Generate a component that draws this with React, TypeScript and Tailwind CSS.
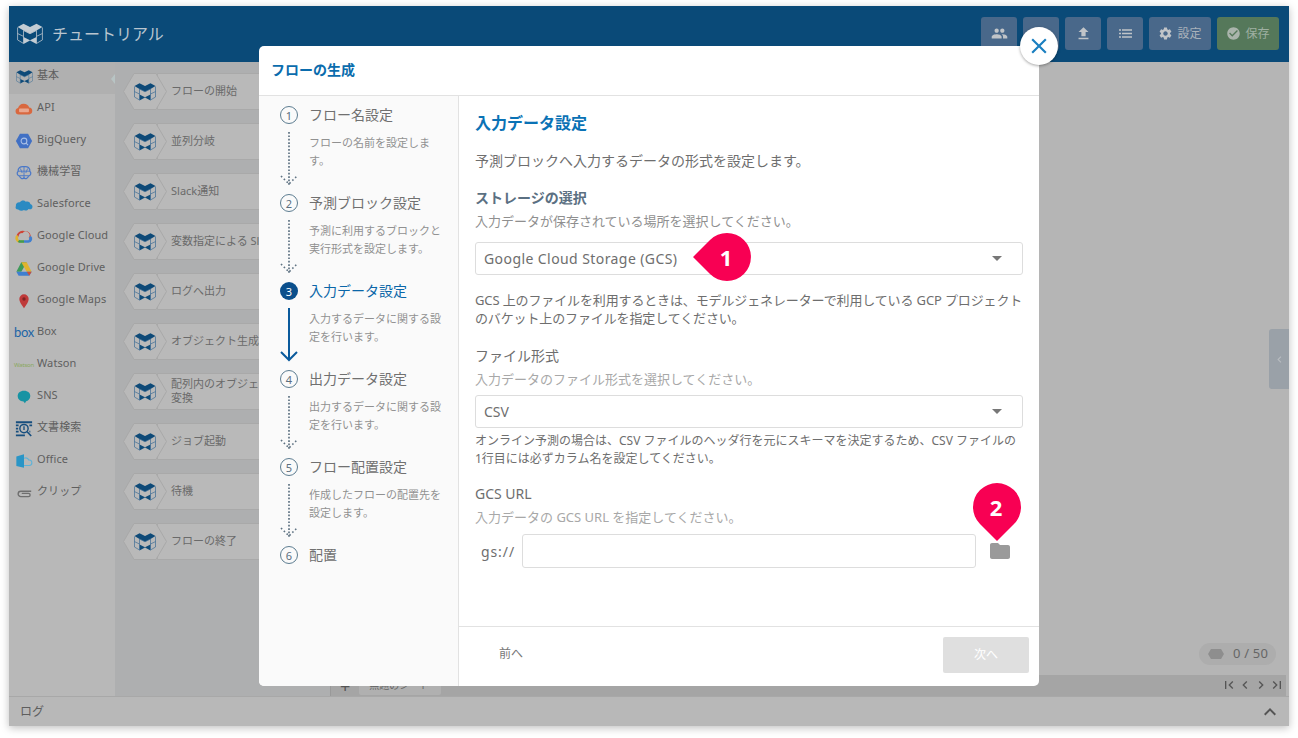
import React from "react";
import { MdPeople, MdFileUpload, MdSettings, MdCheckCircle, MdFolder, MdKeyboardArrowUp, MdChevronLeft, MdClose, MdFirstPage, MdLastPage } from "react-icons/md";

const Logo = ({ c, line, w = 22, h = 18 }: { c: string; line: string; w?: number; h?: number }) => (
  <svg width={w} height={h} viewBox="0 0 22 18" className="shrink-0">
    <path d="M0.5 3 L5.5 0.3 L11 3 L16.5 0.3 L21.5 3 L16.5 6 L11 8.8 L5.5 6 Z" fill={c} />
    <path d="M5.5 11.5 L11 14.2 L16.5 11.5 L16.5 17.4 L11 14.5 L5.5 17.4 Z" fill={c} />
    <path d="M0.5 3.5 V14 L5.5 17 V6 M21.5 3.5 V14 L16.5 17 V6 M0.5 8.6 L5.5 11 M21.5 8.6 L16.5 11 M5.5 6 L11 8.8 L16.5 6" stroke={line} strokeWidth="0.7" fill="none" />
  </svg>
);

const Ic = ({ children }: { children: React.ReactNode }) => (
  <svg width="18" height="18" viewBox="0 0 20 20">{children}</svg>
);

const side: [string, React.ReactNode][] = [
  ["基本", <Logo c="#0e4a78" line="#3f6f96" w={17} h={14} />],
  ["API", <Ic><path d="M4 16 a3.6 3.6 0 0 1 -.6 -7.1 a6.6 6.6 0 0 1 12.4 -.6 a3.9 3.9 0 0 1 .2 7.7 Z" fill="#d9683f" /><rect x="4.5" y="9.5" width="11" height="4" rx="1" fill="#e9a78f" /></Ic>],
  ["BigQuery", <Ic><path d="M5.5 2 H14.5 L19 10 L14.5 18 H5.5 L1 10 Z" fill="#4170c4" /><circle cx="10" cy="10" r="3.2" fill="none" stroke="#a9bfe6" strokeWidth="1.2" /><path d="M12.3 12.3 L14.5 14.5" stroke="#a9bfe6" strokeWidth="1.2" /></Ic>],
  ["機械学習", <Ic><path d="M10 3 C6 2 3 5 3.5 8 C1.5 10 2.5 13 5 13.5 C6 16.5 9 17 10 15.5 C11 17 14 16.5 15 13.5 C17.5 13 18.5 10 16.5 8 C17 5 14 2 10 3 Z" fill="none" stroke="#4a78c8" strokeWidth="1.4" /><path d="M10 3 V15.5 M3.5 8 H16.5 M5 13 L15 13 M6 5 L8 10 M14 5 L12 10" stroke="#4a78c8" strokeWidth="1" fill="none" /></Ic>],
  ["Salesforce", <Ic><path d="M3.5 15 C1 15 0 13 1 11 C0.5 8.5 3 6.5 5.5 7 C7 4.5 10.5 4.5 12 6.5 C14.5 5.5 17 7 17 9 C19.5 9.5 20 12 19 13.5 C18 15 16 15 15 14.5 C13.5 16.5 11.5 16.5 10 15.5 C8 17 5.5 16.5 3.5 15 Z" fill="#2a8ac2" /></Ic>],
  ["Google Cloud", <Ic><path d="M5 16.5 H10 V13.5 H5.5 A2.2 2.2 0 0 1 4 9.8 L2 7.6 A5.2 5.2 0 0 0 5 16.5 Z" fill="#e0b32e" /><path d="M10 16.5 H15 A4.5 4.5 0 0 0 17.5 8.5 L15.3 10.7 A2 2 0 0 1 15 13.5 H10 Z" fill="#3f7fd0" /><path d="M2 7.6 A6.8 6.8 0 0 1 10.5 3.4 L8.4 5.7 A4.2 4.2 0 0 0 4 9.8 Z" fill="#cf4436" /><path d="M10.5 3.4 A6.8 6.8 0 0 1 17.5 8.5 L15.3 10.7 A4.2 4.2 0 0 0 8.4 5.7 Z" fill="#cf4436" /><path d="M10 13.5 H5.5 A2.2 2.2 0 0 1 5 13 L3.2 15.2 A5 5 0 0 0 5 16.5 H10 Z" fill="#3d9a58" /></Ic>],
  ["Google Drive", <Ic><path d="M7 2.5 H13 L7 13 H1.5 Z" fill="#3d9a58" /><path d="M7 2.5 H13 L18.5 13 H13 Z" fill="#e0b32e" /><path d="M4.5 13 H18.5 L15.8 17.5 H4 L1.5 13 Z" fill="#3f7fd0" /><path d="M13 13 H18.5 L15.8 17.5 Z" fill="#c9503c" /></Ic>],
  ["Google Maps", <Ic><path d="M10 18 C7 13.5 4.8 11 4.8 7.8 A5.2 5.2 0 0 1 15.2 7.8 C15.2 11 13 13.5 10 18 Z" fill="#bf3a3a" /><circle cx="10" cy="7.8" r="1.9" fill="#7e2424" /></Ic>],
  ["Box", <span className="text-[13px] tracking-[-0.3px] text-[#1d65a6] leading-none" style={{ fontFamily: '"Lato", sans-serif' }}>box</span>],
  ["Watson", <span className="text-[6px] tracking-[-0.2px] text-[#8aa85e] leading-none">Watson</span>],
  ["SNS", <Ic><path d="M10 3 C14.5 3 17 5.6 17 9 C17 12.2 14.6 14.4 12.4 14.8 L11 17 L9.5 15 C5.5 15 3 12.4 3 9 C3 5.6 5.5 3 10 3 Z" fill="#1793a3" /></Ic>],
  ["文書検索", <Ic><path d="M1 2.5 H19 M1 17 H11 M1 6 H4 M16 6 H19 M1 9.5 H3.5 M1 13 H4 M16 13 H17" stroke="#174e7e" strokeWidth="2" fill="none" /><circle cx="10" cy="9.5" r="4.6" fill="none" stroke="#174e7e" strokeWidth="1.6" /><path d="M13.5 13 L18 17.8" stroke="#174e7e" strokeWidth="1.8" /><path d="M10 7 V11" stroke="#174e7e" strokeWidth="1.5" /></Ic>],
  ["Office", <Ic><path d="M1.5 5 L10 2.5 V17.5 L1.5 15.5 Z" fill="#2a95c6" /><path d="M10 7 A4 4 0 0 1 15.5 9 A3 3 0 0 1 16 15 H10" fill="none" stroke="#5fb3d8" strokeWidth="1.2" /></Ic>],
  ["クリップ", <Ic><path d="M18 8 H6.5 A3 3 0 0 0 6.5 14 H15 A1.8 1.8 0 0 0 15 10.4 H7.5" fill="none" stroke="#6e6e6e" strokeWidth="1.5" /></Ic>],
];

const blocks = ["フローの開始", "並列分岐", "Slack通知", "変数指定による Slack通知", "ログへ出力", "オブジェクト生成", "配列内のオブジェクト変換", "ジョブ起動", "待機", "フローの終了"];

const steps: { t: string; d: string[]; n: string; active?: boolean; last?: boolean }[] = [
  { n: "1", t: "フロー名設定", d: ["フローの名前を設定しま", "す。"] },
  { n: "2", t: "予測ブロック設定", d: ["予測に利用するブロックと", "実行形式を設定します。"] },
  { n: "3", t: "入力データ設定", d: ["入力するデータに関する設", "定を行います。"], active: true },
  { n: "4", t: "出力データ設定", d: ["出力するデータに関する設", "定を行います。"] },
  { n: "5", t: "フロー配置設定", d: ["作成したフローの配置先を", "設定します。"] },
  { n: "6", t: "配置", d: [], last: true },
];

const Caret = () => <span className="w-0 h-0 border-x-[5px] border-x-transparent border-t-[5px] border-t-[#777777]" />;

const HeadBtn = ({ children, w = "w-9" }: { children: React.ReactNode; w?: string }) => (
  <div className={`${w} h-[33px] rounded-[3px] bg-[#49688a] flex items-center justify-center gap-1 text-[#aab2ba] text-[12px]`}>{children}</div>
);

export default function App() {
  return (
    <div className="w-full h-[738px] overflow-hidden bg-white pt-[6px] px-[9px] text-[#6e6e6e]" style={{ fontFamily: '"Noto Sans", "Noto Sans CJK JP", sans-serif' }}>
      <div className="relative h-[720px] flex flex-col shadow-[0_2px_8px_rgba(0,0,0,0.25)]">
        <header className="h-14 shrink-0 bg-[#0a4a78] flex items-center pl-2 pr-[10px]">
          <Logo c="#c3ccd3" line="#b4c0ca" w={26} h={22} />
          <span className="ml-[9px] text-[16px] text-[#b9c5cf]">チュートリアル</span>
          <div className="ml-auto flex gap-[6px] mt-[-1px]">
            <HeadBtn><MdPeople size={17} color="#c0c4c8" /></HeadBtn>
            <HeadBtn><MdPeople size={17} color="#c0c4c8" /></HeadBtn>
            <HeadBtn><MdFileUpload size={17} color="#c0c4c8" /></HeadBtn>
            <HeadBtn>
              <svg width="13" height="9" viewBox="0 0 13 9">
                <path d="M3 1 H13 M3 4.5 H13 M3 8 H13" stroke="#c0c4c8" strokeWidth="1.6" />
                <path d="M0 1 H2 M0 4.5 H2 M0 8 H2" stroke="#c0c4c8" strokeWidth="1.6" />
              </svg>
            </HeadBtn>
            <HeadBtn w="w-[62px]"><MdSettings size={15} color="#c0c4c8" /><span>設定</span></HeadBtn>
            <div className="w-[62px] h-[33px] rounded-[3px] bg-[#55785a] flex items-center justify-center gap-1 text-[#9fb0a2] text-[12px]"><MdCheckCircle size={15} color="#aab4ac" /><span>保存</span></div>
          </div>
        </header>

        <div className="flex-1 flex min-h-0">
          <aside className="w-[106px] shrink-0 bg-[#b8b8b8]">
            {side.map(([label, icon], i) => (
              <div key={label} className={`h-8 flex items-center relative ${i === 0 ? "bg-[#b0b0b0]" : ""}`}>
                <span className="w-7 ml-[1px] -mt-[3px] shrink-0 flex justify-center items-center">{icon}</span>
                <span className="ml-[-3px] pl-[2px] text-[11px] tracking-[0.1px] text-[#5f5f5f] whitespace-nowrap -mt-[5px]">{label}</span>
                {i === 0 && <span className="absolute right-0 top-[12px] w-0 h-0 border-y-[5px] border-y-transparent border-r-[4px] border-r-[#b8c4c4]" />}
              </div>
            ))}
          </aside>

          <section className="w-[215px] shrink-0 bg-[#aeafb0] pl-2 pt-[11px] flex flex-col gap-[13px] overflow-hidden">
            {blocks.map((b) => (
              <div key={b} className="h-[37px] flex shrink-0">
                <div className="relative z-10 w-[44px] h-[37px] shrink-0 -mr-[10px] flex items-center justify-center">
                  <svg width="44" height="37" viewBox="0 0 44 37" className="absolute inset-0">
                    <path d="M11 0.5 H33 L43.5 18.5 L33 36.5 H11 L0.5 18.5 Z" fill="#b9b9b9" stroke="#a8a8a8" />
                  </svg>
                  <span className="relative flex"><Logo c="#0e4a78" line="#3f6f96" /></span>
                </div>
                <div className="w-[190px] h-[37px] bg-[#b9b9b9] border border-[#a9a9a9] rounded-r-[3px] flex items-center pl-[13px] pb-[2px] text-[11px] leading-[14px] text-[#6a6a6a] whitespace-pre-wrap">
                  {b === "配列内のオブジェクト変換" ? "配列内のオブジェクト\n変換" : b}
                </div>
              </div>
            ))}
          </section>

          <main className="flex-1 flex flex-col bg-[#b5b5b5] relative">
            <div className="flex-1" />
            <div className="h-[21px] bg-[#a5a5a5] mr-[3px] border-l border-[#999999] flex items-center">
              <span className="ml-[9px] text-[18px] text-[#555555] leading-none">+</span>
              <div className="ml-[9px] w-[82px] h-[18px] bg-[#b0b0b0] rounded-[2px] text-[10px] text-[#666666] pl-[10px] flex items-center">無題のシート</div>
              <div className="ml-auto mr-[1px] flex items-center gap-0 text-[#555555] -mt-[1px]">
                <MdFirstPage size={16} /><MdChevronLeft size={16} /><MdChevronLeft size={16} className="rotate-180" /><MdLastPage size={16} />
              </div>
            </div>
            <div className="absolute right-[13px] bottom-[31px] h-[22px] w-[77px] rounded-full bg-[#adadad] flex items-center pl-[9px] text-[13px] tracking-[0.2px] text-[#666666]">
              <svg width="16" height="10" viewBox="0 0 16 10"><path d="M3 0 H13 L16 5 L13 10 H3 L0 5 Z" fill="#8e8e8e" /></svg>
              <span className="ml-[9px]">0 / 50</span>
            </div>
            <div className="absolute right-0 top-[267px] w-5 h-[60px] bg-[#9aa1a8] rounded-l-[3px] flex items-center justify-center">
              <MdChevronLeft size={13} color="#b8bcc0" />
            </div>
          </main>
        </div>

        <footer className="h-[30px] shrink-0 bg-[#b8b8b8] border-t border-[#a8a8a8] flex items-center pl-[11px] pr-[7px] text-[12px] text-[#5e5e5e]">
          ログ
          <MdKeyboardArrowUp size={24} color="#555555" className="ml-auto" />
        </footer>

        {/* Modal */}
        <div className="absolute left-[250px] top-[40px] w-[780px] h-[640px] bg-white rounded-[5px] flex flex-col">
          <div className="h-[50px] shrink-0 border-b border-[#e2e2e2] flex items-center pl-3 pb-[2px] text-[14px] font-bold text-[#0a6cad]">フローの生成</div>
          <div className="flex-1 flex min-h-0">
            <nav className="w-[200px] shrink-0 bg-[#fafafa] border-r border-[#e2e2e2] pt-[10px] rounded-bl-[5px]">
              {steps.map((s) => (
                <div key={s.n} className="h-[88px] flex">
                  <div className="ml-[21px] w-[18px] shrink-0 flex flex-col items-center">
                    <span className={`w-[18px] h-[18px] rounded-full flex items-center justify-center text-[11px] leading-none ${s.active ? "bg-[#0a4f8c] text-white" : "border border-[#5d7d91] text-[#5a6e7e]"}`}>{s.n}</span>
                    {!s.last && (
                      s.active ? (
                        <svg width="20" height="62" viewBox="0 0 20 62" className="shrink-0">
                          <path d="M10 8 V60 M2 52 L10 60 L18 52" stroke="#0a5a9c" strokeWidth="2" fill="none" />
                        </svg>
                      ) : (
                        <svg width="20" height="62" viewBox="0 0 20 62" className="shrink-0">
                          <path d="M10 8 V61" stroke="#5e7282" strokeWidth="1.7" strokeDasharray="1.7 1.7" fill="none" />
                          <path d="M2 52 L10 60 L18 52" stroke="#5e7282" strokeWidth="1.6" strokeDasharray="1.6 2.4" fill="none" />
                        </svg>
                      )
                    )}
                  </div>
                  <div className="ml-[11px] w-[136px]">
                    <div className={`text-[14px] leading-[18px] whitespace-nowrap ${s.active ? "text-[#0a66a8]" : "text-[#707070]"}`}>{s.t}</div>
                    <div className="mt-[10px] text-[11px] leading-[18px] text-[#919191] whitespace-nowrap">
                      {s.d.map((l) => <div key={l}>{l}</div>)}
                    </div>
                  </div>
                </div>
              ))}
            </nav>
            <div className="flex-1 flex flex-col min-w-0 relative">
              <div className="flex-1 pl-4 pr-4 pt-[16px]">
                <h2 className="text-[16px] font-bold leading-[22px] text-[#0a72b5]">入力データ設定</h2>
                <p className="mt-[16px] text-[14px] leading-[22px]">予測ブロックへ入力するデータの形式を設定します。</p>
                <h3 className="mt-[15px] text-[14px] font-bold leading-[22px] text-[#5b7082]">ストレージの選択</h3>
                <p className="mt-[1px] text-[13px] leading-[22px] text-[#8f8f8f]">入力データが保存されている場所を選択してください。</p>
                <div className="mt-[10px] h-[33px] w-[548px] border border-[#dddddd] rounded-[3px] flex items-center pl-2 pr-[20px] pb-[1px] text-[14px] tracking-[0.42px]">
                  Google Cloud Storage (GCS)
                  <span className="ml-auto flex"><Caret /></span>
                </div>
                <p className="mt-[16px] w-[560px] text-[13px] leading-[18px] tracking-[-0.13px] whitespace-nowrap">GCS 上のファイルを利用するときは、モデルジェネレーターで利用している GCP プロジェクト<br />のバケット上のファイルを指定してください。</p>
                <h3 className="mt-[18px] text-[14px] leading-[22px]">ファイル形式</h3>
                <p className="mt-[1px] text-[13px] leading-[22px] text-[#a8a8a8]">入力データのファイル形式を選択してください。</p>
                <div className="mt-[5px] h-[33px] w-[548px] border border-[#dddddd] rounded-[3px] flex items-center pl-2 pr-[20px] pb-[1px] text-[14px]">
                  CSV
                  <span className="ml-auto flex"><Caret /></span>
                </div>
                <p className="mt-[4px] w-[560px] text-[12px] leading-[18px] whitespace-nowrap">オンライン予測の場合は、CSV ファイルのヘッダ行を元にスキーマを決定するため、CSV ファイルの<br />1行目には必ずカラム名を設定してください。</p>
                <h3 className="mt-[15px] text-[14px] leading-[22px]">GCS URL</h3>
                <p className="mt-[1px] text-[13px] leading-[22px] text-[#a8a8a8]">入力データの GCS URL を指定してください。</p>
                <div className="mt-[6px] flex items-center">
                  <span className="ml-[6px] w-[41px] text-[14px] tracking-[0.9px]">gs://</span>
                  <div className="w-[454px] h-[34px] border border-[#dddddd] rounded-[3px]" />
                  <MdFolder size={24} color="#9a9a9a" className="ml-[12px]" />
                </div>
              </div>
              <div className="h-[60px] shrink-0 border-t border-[#e2e2e2] flex items-center pl-10 pr-[10px]">
                <span className="text-[12px] text-[#777777] -mt-[6px]">前へ</span>
                <div className="ml-auto -mt-[3px] w-[86px] h-9 bg-[#dfdfdf] rounded-[2px] flex items-center justify-center text-[12px] text-white">次へ</div>
              </div>

              <div className="absolute left-[234px] top-[136px] w-[60px] h-[50px] pointer-events-none">
                <svg width="60" height="50" viewBox="0 0 60 50" className="absolute inset-0">
                  <path d="M0 25 L17 8 A24 24 0 1 1 17 42 Z" fill="#f80053" />
                </svg>
                <span className="absolute left-[21px] top-[9px] w-[24px] text-center text-[22px] leading-[32px] font-bold text-white">1</span>
              </div>
              <div className="absolute left-[513px] top-[387px] w-[50px] h-[60px] pointer-events-none">
                <svg width="50" height="60" viewBox="0 0 50 60" className="absolute inset-0">
                  <path d="M25 58 L8 41 A24 24 0 1 1 42 41 Z" fill="#f80053" />
                </svg>
                <span className="absolute left-[12px] top-[8px] w-[24px] text-center text-[22px] leading-[32px] font-bold text-white">2</span>
              </div>
            </div>
          </div>
          <div className="absolute right-[-19px] top-[-19px] w-[38px] h-[38px] rounded-full bg-white shadow-[0_1px_3px_rgba(0,0,0,0.35)] flex items-center justify-center">
            <MdClose size={26} color="#1a7fc0" />
          </div>
        </div>
      </div>
    </div>
  );
}
